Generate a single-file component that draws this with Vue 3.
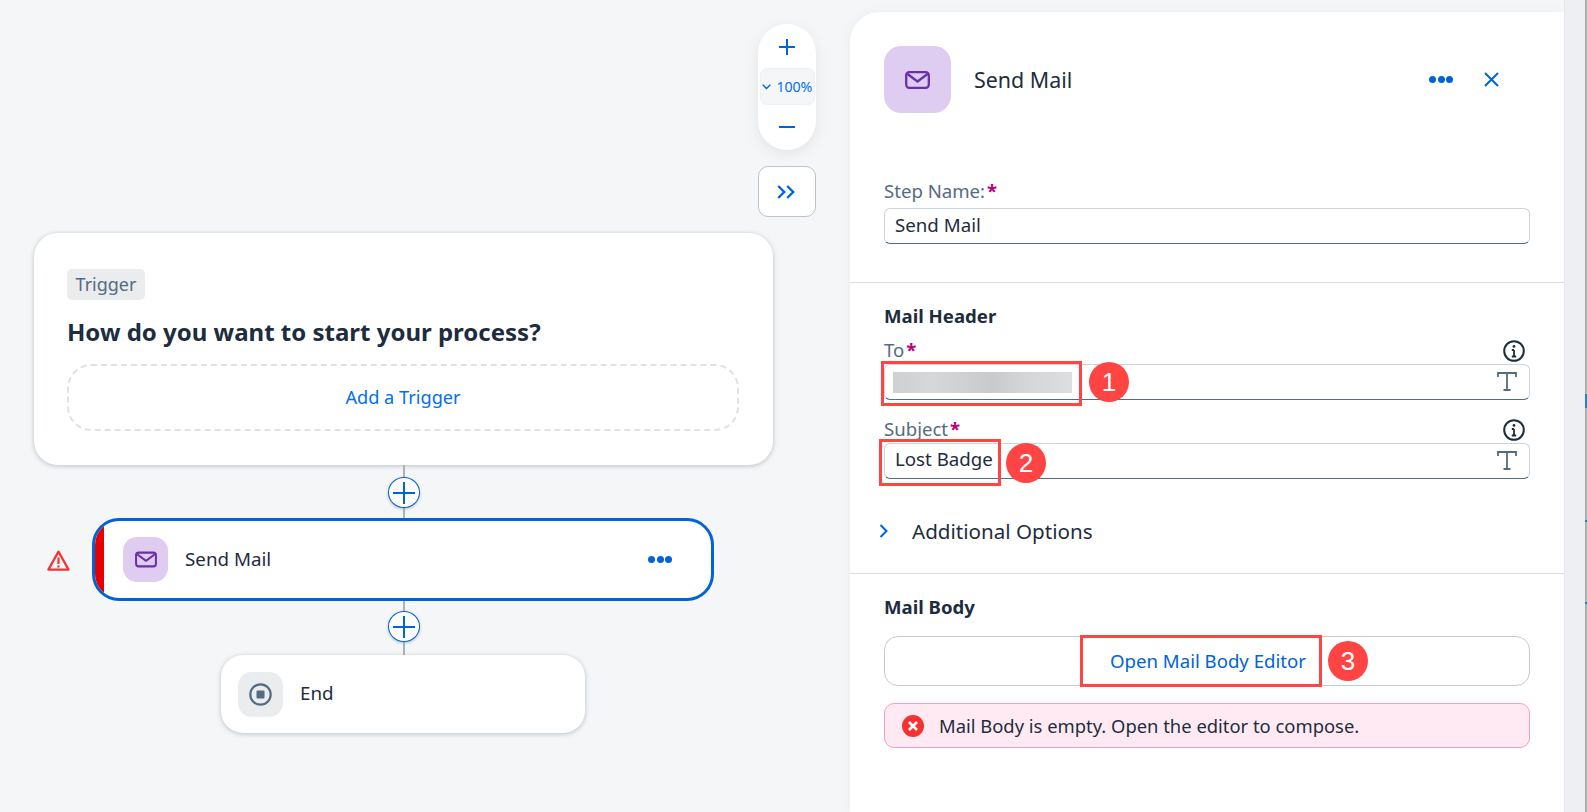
<script setup>
const mailIcon = 'M2.5 3 12.5 10.5 22.5 3'
</script>

<template>
  <div class="app">
    <main class="canvas">
      <div class="zoom">
        <button class="zoom-btn">
          <svg width="16" height="16" viewBox="0 0 16 16"><path d="M8 0v16M0 8h16" /></svg>
        </button>
        <div class="zoom-level">
          <svg width="9" height="6" viewBox="0 0 9 6"><path d="M.7.8 4.5 4.6 8.3.8" /></svg>
          <span>100%</span>
        </div>
        <button class="zoom-btn">
          <svg width="16" height="16" viewBox="0 0 16 16"><path d="M0 8h16" /></svg>
        </button>
      </div>
      <button class="collapse">
        <svg width="18" height="14" viewBox="0 0 18 14"><path d="M1.2 1 7.2 7l-6 6M10.2 1l6 6-6 6" /></svg>
      </button>

      <section class="node trigger">
        <span class="tag">Trigger</span>
        <h2>How do you want to start your process?</h2>
        <div class="add-trigger">Add a Trigger</div>
      </section>

      <div class="connector one"></div>
      <div class="connector two"></div>
      <button class="plus first"><svg width="22" height="22" viewBox="0 0 22 22"><path d="M11 0v22M0 11h22" /></svg></button>
      <button class="plus second"><svg width="22" height="22" viewBox="0 0 22 22"><path d="M11 0v22M0 11h22" /></svg></button>

      <svg class="warning" width="23" height="21" viewBox="0 0 23 21">
        <path d="M11.5 1.6 1.4 19.6h20.2z" />
        <path d="M11.5 7.5v6.5M11.5 15.6v1.8" />
      </svg>

      <section class="node step">
        <i class="error-bar"></i>
        <div class="icon-box small">
          <svg width="22" height="17" viewBox="0 0 25 18"><rect x="1.2" y="1.2" width="22.6" height="15.6" rx="3" /><path :d="mailIcon" /></svg>
        </div>
        <span class="node-name">Send Mail</span>
        <span class="dots"><i></i><i></i><i></i></span>
      </section>

      <section class="node end">
        <div class="icon-box small grey">
          <svg width="23" height="23" viewBox="0 0 23 23"><circle cx="11.5" cy="11.5" r="10.2" /><rect x="7.5" y="7.5" width="8" height="8" rx="1" /></svg>
        </div>
        <span class="node-name">End</span>
      </section>
    </main>

    <aside class="panel">
      <header class="panel-head">
        <div class="icon-box large">
          <svg width="25" height="18" viewBox="0 0 25 18"><rect x="1.2" y="1.2" width="22.6" height="15.6" rx="3" /><path :d="mailIcon" /></svg>
        </div>
        <h1>Send Mail</h1>
        <span class="dots"><i></i><i></i><i></i></span>
        <svg class="close" width="15" height="15" viewBox="0 0 15 15"><path d="M1 1l13 13M14 1 1 14" /></svg>
      </header>

      <div class="section first-section">
        <label class="label step-label">Step Name:<b>*</b></label>
        <div class="input"><span>Send Mail</span></div>
      </div>

      <div class="section header-section">
        <h3>Mail Header</h3>
        <div class="label-row to-row">
          <label class="label">To<b>*</b></label>
          <svg class="info" width="22" height="22" viewBox="0 0 22 22"><circle cx="11" cy="11" r="9.8" /><path d="M11 10v6.5M8.8 16.5h4.4M8.8 10H11" /><circle class="fill" cx="11" cy="6.4" r="1.4" /></svg>
        </div>
        <div class="input">
          <div class="blur"></div>
          <svg class="t" width="20" height="19" viewBox="0 0 20 19"><path d="M1 5V1h18v4M10 1v17M6.5 18h7" /></svg>
          <div class="mark mark-to"></div>
          <div class="badge badge-to">1</div>
        </div>
        <div class="label-row subject-row">
          <label class="label">Subject<b>*</b></label>
          <svg class="info" width="22" height="22" viewBox="0 0 22 22"><circle cx="11" cy="11" r="9.8" /><path d="M11 10v6.5M8.8 16.5h4.4M8.8 10H11" /><circle class="fill" cx="11" cy="6.4" r="1.4" /></svg>
        </div>
        <div class="input">
          <span class="subject-value">Lost Badge</span>
          <svg class="t" width="20" height="19" viewBox="0 0 20 19"><path d="M1 5V1h18v4M10 1v17M6.5 18h7" /></svg>
          <div class="mark mark-subject"></div>
          <div class="badge badge-subject">2</div>
        </div>
        <div class="options">
          <svg width="10" height="14" viewBox="0 0 10 14"><path d="M1.5 1l6 6-6 6" /></svg>
          <span>Additional Options</span>
        </div>
      </div>

      <div class="section body-section">
        <h3>Mail Body</h3>
        <div class="editor-btn">
          <span>Open Mail Body Editor</span>
          <div class="mark mark-editor"></div>
          <div class="badge badge-editor">3</div>
        </div>
        <div class="strip">
          <svg width="22" height="22" viewBox="0 0 22 22"><circle class="strip-bg" cx="11" cy="11" r="11" /><path d="M7 7l8 8M15 7l-8 8" /></svg>
          <span>Mail Body is empty. Open the editor to compose.</span>
        </div>
      </div>
    </aside>

    <div class="gutter"></div>
    <div class="edge">
      <i class="e1"></i><i class="e2"></i><i class="e3"></i>
    </div>
  </div>
</template>

<style>
html, body { margin: 0; background: #f5f6f7; }
</style>

<style scoped>
.app {
  display: flex;
  width: 1587px;
  height: 812px;
  overflow: hidden;
  background: #f5f6f7;
  font-family: "Noto Sans", "Open Sans", sans-serif;
  color: #1d2d3e;
}
button { padding: 0; background: none; border: 0; font: inherit; }
svg { display: block; flex: none; fill: none; stroke-linecap: butt; }

/* canvas */
.canvas { position: relative; flex: none; width: 850px; height: 812px; }
.zoom {
  position: absolute; left: 758px; top: 24px;
  display: flex; flex-direction: column; align-items: center;
  width: 58px; height: 126px; border-radius: 29px;
  background: #fff;
  box-shadow: 0 4px 14px rgba(85, 107, 130, .12);
}
.zoom-btn { display: flex; align-items: center; justify-content: center; box-sizing: border-box; width: 100%; height: 44px; padding-top: 2px; }
.zoom-btn:last-child { height: 45px; padding: 0 0 2px; }
.zoom-btn svg path { stroke: #0064d9; stroke-width: 2; }
.zoom-level {
  display: flex; align-items: center; gap: 6px;
  box-sizing: border-box; width: 55px; height: 37px; padding: 0 0 0 2px;
  border-radius: 8px; background: #f5f6f7;
  box-shadow: 0 0 0 1px #eef0f2 inset;
  color: #0070f2; font-size: 14.2px; letter-spacing: -.1px; white-space: nowrap;
}
.zoom-level svg path { stroke: #0064d9; stroke-width: 1.4; }
.collapse {
  position: absolute; left: 758px; top: 166px;
  display: flex; align-items: center; justify-content: center;
  box-sizing: border-box; width: 58px; height: 51px; padding-right: 2px;
  border: 1px solid #bcc3ca; border-radius: 10px; background: #fff;
}
.collapse path { stroke: #0064d9; stroke-width: 2.4; }

.node {
  position: absolute; box-sizing: border-box; background: #fff;
  box-shadow: 0 1px 5px rgba(85, 107, 130, .38);
}
.trigger { left: 34px; top: 233px; width: 739px; height: 232px; padding: 36px 33px; border-radius: 24px; }
.tag {
  display: inline-flex; align-items: center; justify-content: center;
  box-sizing: border-box; width: 78px; height: 31px; padding-bottom: 2px;
  border-radius: 5px; background: #eaecee; color: #556b82; font-size: 18px;
}
.trigger h2 { margin: 16px 0 0; height: 32px; font-size: 24px; line-height: 32px; font-weight: 700; white-space: nowrap; }
.add-trigger {
  display: flex; align-items: center; justify-content: center;
  box-sizing: border-box; width: 672px; height: 67px; margin-top: 16px; padding-bottom: 1px;
  border: 2px dashed #dfe1e4; border-radius: 24px;
  color: #0070f2; font-size: 18.2px;
}
.connector { position: absolute; left: 403px; width: 2px; background: #a9b4be; }
.one { top: 465px; height: 53px; }
.two { top: 601px; height: 54px; }
.plus {
  position: absolute; left: 388px; display: flex; align-items: center; justify-content: center;
  box-sizing: border-box; width: 32px; height: 31px;
  border: 1px solid #0064d9; border-radius: 50%; background: #fff;
  box-shadow: 0 1px 3px rgba(85, 107, 130, .4);
}
.plus svg path { stroke: #0064d9; stroke-width: 2; }
.first { top: 477px; }
.second { top: 611px; }
.warning { position: absolute; left: 47px; top: 550px; }
.warning path { stroke: #f53232; stroke-width: 2.2; stroke-linejoin: round; }

.step {
  left: 92px; top: 518px; display: flex; align-items: center;
  width: 622px; height: 83px; padding: 0 39px 0 28px;
  border: 3px solid #0064d9; border-radius: 27px; overflow: hidden; box-shadow: none;
}
.error-bar { position: absolute; left: 0; top: 0; bottom: 0; width: 9px; background: #e60000; }
.node-name { margin-left: 17px; font-size: 18.8px; margin-top: -2px; }
.step .dots { margin-left: auto; }
.end {
  left: 221px; top: 655px; display: flex; align-items: center;
  width: 364px; height: 78px; padding: 0 17px; border-radius: 22px;
}
.icon-box { display: flex; align-items: center; justify-content: center; flex: none; background: #dfcdf1; }
.icon-box rect, .icon-box > svg > path { stroke: #6b2fae; stroke-width: 2.3; stroke-linejoin: round; }
.small { width: 45px; height: 45px; border-radius: 14px; }
.large { width: 67px; height: 67px; border-radius: 17px; }
.grey { background: #eaecee; }
.grey circle { stroke: #556b82; stroke-width: 2.2; }
.grey rect { fill: #556b82; stroke: none; }
.dots { display: flex; gap: 1.5px; }
.dots i { width: 7px; height: 7px; border-radius: 50%; background: #0064d9; }

/* panel */
.panel {
  flex: none; box-sizing: border-box; width: 714px; height: 800px; margin-top: 12px;
  border-radius: 30px 0 0 0; background: #fff;
  box-shadow: -2px 0 10px rgba(85, 107, 130, .05);
}
.panel-head { display: flex; align-items: center; height: 67px; padding: 34px 65px 0 34px; }
.panel-head h1 { margin: 0 0 1px 23px; font-size: 21.4px; font-weight: 400; }
.panel-head .dots { margin-left: auto; }
.close { margin-left: 31px; }
.close path { stroke: #0064d9; stroke-width: 2; }

.section { padding: 0 34px; border-bottom: 1px solid #dcdee0; }
.first-section { height: 170px; box-sizing: border-box; padding-top: 67px; }
.header-section { box-sizing: border-box; height: 291px; padding-top: 22px; }
.body-section { padding-top: 22px; border-bottom: 0; }
.step-label { display: block; height: 28px; line-height: 22px; }
.label { color: #556b82; font-size: 18.6px; }
.label b { color: #b8007a; font-weight: 700; margin-left: 2px; }
h3 { margin: 0; height: 22px; font-size: 18.6px; line-height: 22px; font-weight: 700; }
.label-row { display: flex; align-items: center; justify-content: space-between; height: 22px; }
.label-row .label { margin-top: -2px; }
.to-row { margin-top: 12px; margin-bottom: 3px; }
.subject-row { margin-top: 18px; margin-bottom: 3px; }
.info circle { stroke: #1d2d3e; stroke-width: 2; }
.info .fill { fill: #1d2d3e; stroke: none; }
.info path { stroke: #1d2d3e; stroke-width: 1.8; }
.label-row .info { margin: 1px 5px 0 0; }
.input {
  position: relative; display: flex; align-items: center; justify-content: space-between;
  box-sizing: border-box; width: 646px; height: 36px; padding: 0 10px;
  border: 1px solid #cdd3da; border-bottom-color: #556b82; border-radius: 6px;
  font-size: 18.7px; background: #fff;
}
.input span { margin-top: -3px; }
.input .subject-value { margin-top: -5px; }
.blur {
  width: 179px; height: 21px;
  background: linear-gradient(90deg, #cfd0d2 0%, #d6d7d8 22%, #c8cacc 55%, #d5d6d8 75%, #dddedf 100%);
  margin-left: -2px;
}
.t { position: absolute; right: 12px; top: 7px; }
.t path { stroke: #556b82; stroke-width: 1.8; }
.mark { position: absolute; box-sizing: border-box; border: 3px solid #ff4444; pointer-events: none; }
.badge {
  position: absolute; display: flex; align-items: center; justify-content: center;
  width: 40px; height: 40px; border-radius: 50%;
  background: #ff4444; color: #fff; font: 26px/1 "Liberation Sans", Arial, sans-serif;
}
.mark-to { left: -4px; top: -4px; width: 201px; height: 45px; }
.badge-to { left: 204px; top: -3px; }
.mark-subject { left: -6px; top: -5px; width: 122px; height: 47px; }
.badge-subject { left: 121px; top: -1px; }
.mark-editor { left: 195px; top: -2px; width: 242px; height: 52px; }
.badge-editor { left: 443px; top: 4px; }
.options { display: flex; align-items: center; height: 22px; margin: 41px 0 0 -5px; }
.options svg { margin-right: 23px; }
.options path { stroke: #0064d9; stroke-width: 2; }
.options span { font-size: 20.6px; }
.editor-btn {
  position: relative; display: flex; align-items: center; justify-content: center;
  box-sizing: border-box; width: 646px; height: 50px; margin-top: 18px; padding: 0 0 2px 2px;
  border: 1px solid #c4cad1; border-radius: 14px;
  color: #0064d9; font-size: 18.6px;
}
.strip {
  display: flex; align-items: center;
  box-sizing: border-box; width: 646px; height: 45px; margin-top: 17px; padding: 0 0 0 17px;
  border: 1px solid #f99cc4; border-radius: 10px; background: #ffeaf4;
  font-size: 18.4px;
}
.strip svg { margin-right: 15px; }
.strip-bg { fill: #f53232; }
.strip path { stroke: #fff; stroke-width: 2.6; }

.gutter { flex: none; width: 21px; height: 812px; background: #eeeff2; box-shadow: inset 1px 0 1px #e6e7ea; }
.edge { position: relative; flex: none; width: 2px; height: 812px; background: #aeaeae; }
.edge i { position: absolute; left: 0; width: 2px; background: #3d78c0; }
.e1 { top: 394px; height: 14px; }
.e2 { top: 520px; height: 2px; }
.e3 { top: 602px; height: 2px; }
</style>
